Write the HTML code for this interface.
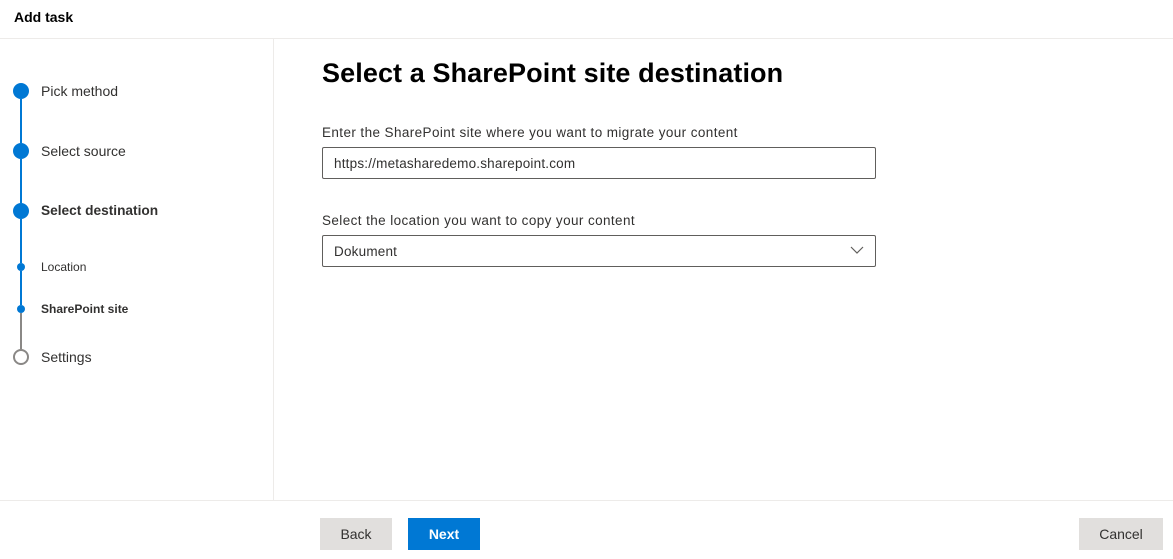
<!DOCTYPE html>
<html><head><style>
*{margin:0;padding:0;box-sizing:border-box}
body{width:1173px;height:559px;background:#fff;font-family:"Liberation Sans",sans-serif;color:#323130;position:relative;overflow:hidden}
.a{position:absolute}
.t{font-size:14px}
.dot{position:absolute;border-radius:50%;background:#0078d4}
.ln{position:absolute;width:2px;background:#0078d4;left:20px}
.btn{position:absolute;height:32px;font-size:14px;font-weight:bold;display:flex;align-items:center;justify-content:center}
.lbl{font-size:13.5px;letter-spacing:0.4px}
</style></head><body>
<div class="a" style="left:14px;top:9px;font-size:14px;font-weight:bold;color:#000">Add task</div>
<div class="a" style="left:0;top:38px;width:1173px;height:1px;background:#edebe9"></div>
<div class="a" style="left:273px;top:39px;width:1px;height:461px;background:#edebe9"></div>
<div class="a" style="left:0;top:500px;width:1173px;height:1px;background:#edebe9"></div>

<div class="dot" style="left:13px;top:83px;width:16px;height:16px"></div>
<div class="ln" style="top:99px;height:44px"></div>
<div class="dot" style="left:13px;top:143px;width:16px;height:16px"></div>
<div class="ln" style="top:159px;height:44px"></div>
<div class="dot" style="left:13px;top:203px;width:16px;height:16px"></div>
<div class="ln" style="top:219px;height:44px"></div>
<div class="dot" style="left:17px;top:263px;width:8px;height:8px"></div>
<div class="ln" style="top:271px;height:34px"></div>
<div class="dot" style="left:17px;top:305px;width:8px;height:8px"></div>
<div class="ln" style="top:313px;height:36px;background:#8a8886"></div>
<div class="a" style="left:13px;top:349px;width:16px;height:16px;border:2px solid #8a8886;border-radius:50%"></div>

<div class="a t" style="left:41px;top:83px">Pick method</div>
<div class="a t" style="left:41px;top:143px">Select source</div>
<div class="a t" style="left:41px;top:203px;font-weight:bold;font-size:13.7px">Select destination</div>
<div class="a" style="left:41px;top:260px;font-size:12px">Location</div>
<div class="a" style="left:41px;top:302px;font-size:12px;font-weight:bold">SharePoint site</div>
<div class="a t" style="left:41px;top:349px">Settings</div>

<div class="a" style="left:322px;top:58px;font-size:27px;letter-spacing:0.1px;font-weight:bold;color:#000">Select a SharePoint site destination</div>
<div class="a lbl" style="left:322px;top:125px">Enter the SharePoint site where you want to migrate your content</div>
<div class="a" style="left:322px;top:147px;width:554px;height:32px;border:1px solid #605e5c;border-radius:2px;font-size:13.5px;letter-spacing:0.2px;padding:8px 11px">https://metasharedemo.sharepoint.com</div>
<div class="a lbl" style="left:322px;top:213px">Select the location you want to copy your content</div>
<div class="a" style="left:322px;top:235px;width:554px;height:32px;border:1px solid #605e5c;border-radius:2px;font-size:13.5px;letter-spacing:0.2px;padding:8px 11px">Dokument</div>
<svg class="a" style="left:850px;top:245px" width="14" height="10"><path d="M1 2l6 6 6-6" fill="none" stroke="#605e5c" stroke-width="1.2"/></svg>

<div class="btn" style="left:320px;top:518px;width:72px;background:#e1dfdd;font-weight:normal;color:#323130">Back</div>
<div class="btn" style="left:408px;top:518px;width:72px;background:#0078d4;color:#fff">Next</div>
<div class="btn" style="left:1079px;top:518px;width:84px;background:#e1dfdd;font-weight:normal;color:#323130">Cancel</div>
</body></html>
